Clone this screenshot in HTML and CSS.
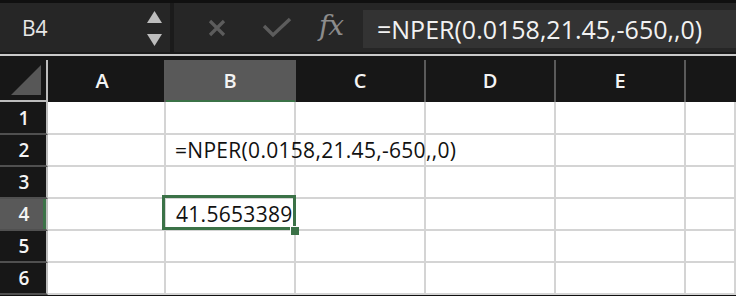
FILE: index.html
```html
<!DOCTYPE html>
<html lang="en">
  <head>
    <meta charset="UTF-8" />
    <meta name="viewport" content="width=device-width, initial-scale=1.0" />
    <title>NPER - Spreadsheet</title>
    <link rel="stylesheet" href="styles.css">
  </head>
  <body>
    <div class="app">
      <!-- Formula bar -->
      <div class="formula-bar">
        <div class="name-box">
          <span class="cell-ref">B4</span>
          <div class="spinner">
            <svg width="15" height="12" viewBox="0 0 15 12"><polygon points="7.5,0 15,12 0,12" fill="#bdbdbd"/></svg>
            <svg width="15" height="12" viewBox="0 0 15 12"><polygon points="0,0 15,0 7.5,12" fill="#bdbdbd"/></svg>
          </div>
        </div>
        <div class="bar-divider"></div>
        <div class="bar-tools">
          <svg class="tool" width="20" height="18" viewBox="0 0 20 18">
            <path d="M3 2 L17 16 M17 2 L3 16" stroke="#5c5c5c" stroke-width="3.2" fill="none"/>
          </svg>
          <svg class="tool" width="30" height="22" viewBox="0 0 30 22">
            <path d="M2 9 L11 18 L28 2" stroke="#5c5c5c" stroke-width="3.4" fill="none"/>
          </svg>
          <span class="fx">fx</span>
        </div>
        <div class="formula-input">=NPER(0.0158,21.45,-650,,0)</div>
      </div>
      <div class="bar-line"></div>

      <!-- Sheet grid -->
      <div class="sheet">
        <div class="corner">
          <svg width="30" height="30" viewBox="0 0 30 30"><polygon points="30,0 30,30 0,30" fill="#575757"/></svg>
        </div>
        <div class="col-head first">A</div>
        <div class="col-head active">B</div>
        <div class="col-head">C</div>
        <div class="col-head">D</div>
        <div class="col-head">E</div>
        <div class="col-head last"></div>

        <div class="row-head">1</div>
        <div class="cell"></div><div class="cell"></div><div class="cell"></div><div class="cell"></div><div class="cell"></div><div class="cell"></div>

        <div class="row-head">2</div>
        <div class="cell"></div>
        <div class="cell overflow">=NPER(0.0158,21.45,-650,,0)</div>
        <div class="cell"></div><div class="cell"></div><div class="cell"></div><div class="cell"></div>

        <div class="row-head">3</div>
        <div class="cell"></div><div class="cell"></div><div class="cell"></div><div class="cell"></div><div class="cell"></div><div class="cell"></div>

        <div class="row-head active">4</div>
        <div class="cell"></div>
        <div class="cell selected">
          41.5653389
          <span class="sel-frame"></span>
          <span class="fill-handle"></span>
        </div>
        <div class="cell"></div><div class="cell"></div><div class="cell"></div><div class="cell"></div>

        <div class="row-head">5</div>
        <div class="cell"></div><div class="cell"></div><div class="cell"></div><div class="cell"></div><div class="cell"></div><div class="cell"></div>

        <div class="row-head">6</div>
        <div class="cell"></div><div class="cell"></div><div class="cell"></div><div class="cell"></div><div class="cell"></div><div class="cell"></div>
      </div>
    </div>
  </body>
</html>
```

FILE: styles.css
```css
body {
  margin: 0;
  padding: 0;
  background-color: #101010;
  font-family: "Open Sans", Arial, sans-serif;
  overflow: hidden;
}

.app {
  width: 736px;
  height: 296px;
  overflow: hidden;
}

/* Formula bar */
.formula-bar {
  display: flex;
  height: 49px;
  margin-top: 3px;
  background-color: #262626;
}

.name-box {
  width: 166px;
  margin-left: 2px;
  display: flex;
  align-items: center;
  justify-content: space-between;
  padding-right: 6px;
  box-sizing: border-box;
}

.cell-ref {
  color: #e6e6e6;
  font-size: 21px;
  margin-left: 20px;
  margin-top: 1px;
}

.spinner {
  display: flex;
  flex-direction: column;
  gap: 11px;
  margin-top: 1px;
}

.bar-divider {
  width: 4px;
  background-color: #1b1b1b;
  margin-left: 2px;
}

.bar-tools {
  width: 189px;
  display: flex;
  align-items: center;
}

.tool:first-child {
  margin-left: 33px;
}

.tool + .tool {
  margin-left: 35px;
}

.fx {
  font-family: "DejaVu Serif", "Liberation Serif", serif;
  font-style: italic;
  color: #8c8c8c;
  font-size: 28px;
  margin-left: 27px;
  margin-top: -4px;
  letter-spacing: -1px;
}

.formula-input {
  flex: 1;
  margin-top: 7px;
  height: 38px;
  background-color: #333333;
  color: #f2f2f2;
  font-size: 25px;
  line-height: 38px;
  padding-left: 14px;
  white-space: nowrap;
}

.bar-line {
  height: 8px;
  background: linear-gradient(#1a1a1a 0, #1a1a1a 2px, #c9c9c9 2px, #c9c9c9 4px, #171717 4px);
}

/* Sheet grid */
.sheet {
  display: grid;
  grid-template-columns: 48px 118px 130px 130px 130px 130px 50px;
  grid-template-rows: 42px 33px repeat(5, 32px);
  background-color: #fff;
}

.corner {
  background-color: #171717;
  border-right: 2px solid #bdbdbd;
  border-bottom: 2px solid #bdbdbd;
  display: flex;
  align-items: flex-end;
  justify-content: flex-end;
  padding: 0 5px 5px 0;
  box-sizing: border-box;
}

.col-head {
  background-color: #171717;
  color: #f4f4f4;
  font-size: 20px;
  font-weight: 600;
  display: flex;
  align-items: center;
  justify-content: center;
  border-right: 2px solid #5a5a5a;
  padding-bottom: 2px;
}

.col-head.first {
  padding-right: 8px;
}

.col-head.active {
  background-color: #595959;
  border-right-color: #595959;
  border-bottom: 2px solid #3b7247;
  padding-bottom: 0;
}

.col-head.last {
  border-right: none;
}

.row-head {
  background-color: #171717;
  color: #f4f4f4;
  font-size: 19px;
  font-weight: 600;
  display: flex;
  align-items: center;
  justify-content: center;
  border-right: 2px solid #bdbdbd;
  border-bottom: 2px solid #505050;
  padding-left: 2px;
}

.row-head.active {
  background-color: #595959;
  box-shadow: inset -3px 0 0 #3b7247;
}

.cell {
  border-right: 2px solid #d4d4d4;
  border-bottom: 2px solid #d4d4d4;
  color: #111;
  font-size: 21px;
  letter-spacing: 0.3px;
  display: flex;
  align-items: center;
  padding-left: 9px;
  white-space: nowrap;
  position: relative;
}

.cell.overflow {
  overflow: visible;
  z-index: 1;
}

.cell.selected {
  padding-left: 10px;
  z-index: 2;
}

.sel-frame {
  position: absolute;
  top: -4px;
  left: -4px;
  right: -2px;
  bottom: -1px;
  border: 3px solid #3b7247;
}

.fill-handle {
  position: absolute;
  right: -5px;
  bottom: -6px;
  width: 8px;
  height: 8px;
  background-color: #3b7247;
  border-left: 1px solid #fff;
  border-top: 1px solid #fff;
}
```
